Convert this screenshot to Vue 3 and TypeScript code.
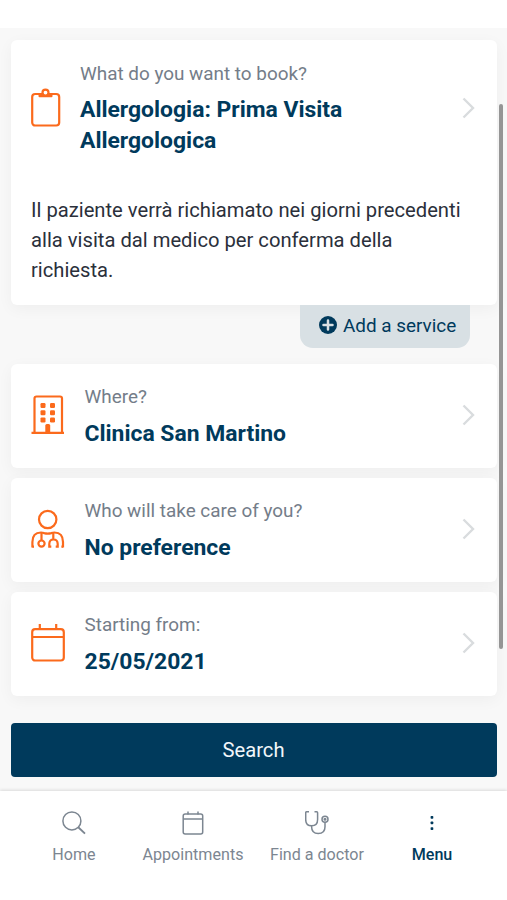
<script setup lang="ts">
interface Field {
  id: 'where' | 'doctor' | 'date'
  label: string
  value: string
}

interface NavItem {
  id: 'home' | 'appointments' | 'find' | 'menu'
  label: string
}

const fields: Field[] = [
  { id: 'where', label: 'Where?', value: 'Clinica San Martino' },
  { id: 'doctor', label: 'Who will take care of you?', value: 'No preference' },
  { id: 'date', label: 'Starting from:', value: '25/05/2021' },
]

const navItems: NavItem[] = [
  { id: 'home', label: 'Home' },
  { id: 'appointments', label: 'Appointments' },
  { id: 'find', label: 'Find a doctor' },
  { id: 'menu', label: 'Menu' },
]
</script>

<template>
  <div class="screen">
    <main class="content">
      <section class="card service">
        <div class="service-row">
          <svg class="icon clipboard" viewBox="0 0 30 40">
            <rect x="1.2" y="6" width="27" height="31.500" rx="3" />
            <path d="M7.500 6.500h14v1.700q0 1-1 1h-12q-1 0-1-1z" fill="#fb6a1c" stroke="none" />
            <circle cx="14.5" cy="4.600" r="3" fill="#fff" />
          </svg>
          <div class="text">
            <span class="label">What do you want to book?</span>
            <strong class="value">Allergologia: Prima Visita<br />Allergologica</strong>
          </div>
          <svg class="chevron" viewBox="0 0 14 22"><path d="M2.500 1.500 12 11 2.500 20.500" /></svg>
        </div>
        <p class="note">
          Il paziente verrà richiamato nei giorni precedenti<br />alla visita dal medico per conferma della<br />richiesta.
        </p>
      </section>

      <button class="add" type="button">
        <svg class="plus" viewBox="0 0 18 18">
          <circle cx="9" cy="9" r="9" fill="#003a5c" />
          <path d="M9 4.500v9M4.500 9h9" stroke="#d8e0e4" stroke-width="2.500" stroke-linecap="round" />
        </svg>
        <span class="add-label">Add a service</span>
      </button>

      <section v-for="field in fields" :key="field.id" class="card field">
        <svg v-if="field.id === 'where'" class="icon" viewBox="0 0 34 40">
          <path d="M.5 37.800h32.500M3.500 37.500V3.500q0-2 2-2h23.500q2 0 2 2V37.500" />
          <g fill="#fb6a1c" stroke="none">
            <rect x="9.500" y="8" width="5" height="5" rx="1.200" />
            <rect x="19" y="8" width="5" height="5" rx="1.200" />
            <rect x="9.500" y="15.200" width="5" height="5" rx="1.200" />
            <rect x="19" y="15.200" width="5" height="5" rx="1.200" />
            <rect x="9.500" y="22.400" width="5" height="5" rx="1.200" />
            <rect x="19" y="22.400" width="5" height="5" rx="1.200" />
            <path d="M14.300 38v-7.500q0-1.500 1.500-1.500h1.900q1.500 0 1.500 1.500v7.500z" />
          </g>
        </svg>
        <svg v-else-if="field.id === 'doctor'" class="icon" viewBox="0 0 34 40">
          <circle cx="16.700" cy="10.500" r="8.700" />
          <path d="M1.400 38.600v-5.600q0-9.500 8.600-9.500 1.500 0 3.200.6 3.500 1 7 0 1.700-.6 3.200-.6 8.600 0 8.600 9.500v5.600" />
          <path d="M10.500 24v7M22.300 24v6.500M20.300 37.600h-2v-2.600q0-4.500 4.200-4.500t4.200 4.500v2.600h-2" />
          <path d="M1.400 37.600h1.600M32 37.600h-1.600" />
          <circle cx="10.500" cy="34.600" r="3.100" />
        </svg>
        <svg v-else class="icon" viewBox="0 0 34 40">
          <rect x="1.200" y="6.200" width="31.600" height="31.300" rx="3" />
          <path d="M1.200 14h31.600M8.800 1v5.500M25.200 1v5.500" />
        </svg>
        <div class="text">
          <span class="label">{{ field.label }}</span>
          <strong class="value">{{ field.value }}</strong>
        </div>
        <svg class="chevron" viewBox="0 0 14 22"><path d="M2.500 1.500 12 11 2.500 20.500" /></svg>
      </section>

      <button class="search" type="button">Search</button>
      <div class="scrollbar"></div>
    </main>

    <nav class="nav">
      <a v-for="item in navItems" :key="item.id" class="nav-item" :class="item.id">
        <svg class="nav-icon" viewBox="0 0 24 24">
          <template v-if="item.id === 'home'">
            <circle cx="9.900" cy="9.900" r="9" />
            <path d="m16 16 7 6.600" stroke-width="1.900" />
          </template>
          <template v-else-if="item.id === 'appointments'">
            <rect x="2.200" y="3" width="19.500" height="20" rx="2" />
            <path d="M2.200 8h19.500M7 .5v3M17 .5v3" />
          </template>
          <template v-else-if="item.id === 'find'">
            <path d="M4 .8H1.700q-1 0-1 1V8.500q0 6.300 5.900 6.300 6 0 6-6.300V1.800q0-1-1-1H9.500" />
            <path d="M6.600 14.800v1q0 6.800 6.600 6.800 6.800 0 6.800-6.800v-4.500" />
            <circle cx="20" cy="8.300" r="3" />
            <circle cx="20" cy="8.300" r=".8" />
          </template>
          <g v-else fill="#003a5c" stroke="none">
            <rect x="10.600" y="5" width="2.700" height="2.700" rx=".7" />
            <rect x="10.600" y="10.600" width="2.700" height="2.700" rx=".7" />
            <rect x="10.600" y="16.200" width="2.700" height="2.700" rx=".7" />
          </g>
        </svg>
        <span class="nav-label">{{ item.label }}</span>
      </a>
    </nav>
  </div>
</template>

<style>
body {
  margin: 0;
  background: #fff;
}
</style>

<style scoped>
.screen {
  box-sizing: border-box;
  width: 507px;
  height: 900px;
  padding-top: 28px;
  overflow: hidden;
  display: flex;
  flex-direction: column;
  background: #fff;
  font-family: Roboto, sans-serif;
  color: #2b303b;
}
.content {
  position: relative;
  box-sizing: border-box;
  height: 763px;
  flex: none;
  padding: 12px 10px 0 11px;
  display: flex;
  flex-direction: column;
  background: #f8f8f8;
}
.card {
  box-sizing: border-box;
  flex: none;
  background: #fff;
  border-radius: 6px;
  box-shadow: 0 4px 16px rgba(0, 0, 0, 0.045);
}
.service {
  height: 264.5px;
  padding: 19px 22px 0 20px;
}
.service-row {
  display: flex;
  height: 137.4px;
}
.service-row .icon {
  margin-top: 28.5px;
  width: 30px;
}
.service-row .text {
  margin-left: 19px;
}
.service-row .chevron {
  margin-top: 38px;
}
.icon {
  width: 34px;
  height: 40px;
  flex: none;
  fill: none;
  stroke: #fb6a1c;
  stroke-width: 2.2;
}
.text {
  flex: 1;
  display: flex;
  flex-direction: column;
}
.label {
  font-size: 18.9px;
  line-height: 30px;
  color: #747d89;
}
.value {
  margin-top: 5px;
  font-size: 22.9px;
  line-height: 31px;
  font-weight: 700;
  color: #003a5c;
  white-space: nowrap;
}
.chevron {
  width: 14px;
  height: 22px;
  flex: none;
  fill: none;
  stroke: #d9dcde;
  stroke-width: 2.4;
}
.note {
  margin: 0;
  font-size: 20.2px;
  line-height: 29.7px;
  white-space: nowrap;
}
.add {
  align-self: flex-end;
  box-sizing: border-box;
  width: 170px;
  height: 43.5px;
  margin: 0 27px 16px 0;
  padding: 0 0 2px 19px;
  border: 0;
  border-radius: 0 0 13px 13px;
  display: flex;
  align-items: center;
  gap: 6px;
  background: #d8e0e4;
  color: #003a5c;
  font: 18.9px Roboto, sans-serif;
  white-space: nowrap;
}
.plus {
  width: 18px;
  height: 18px;
  flex: none;
}
.field {
  height: 104px;
  margin-bottom: 10px;
  padding: 18px 22px 0 20px;
  display: flex;
}
.field .icon {
  margin-top: 13px;
}
.field .text {
  margin-left: 19.5px;
}
.field .value {
  margin-top: 6px;
}
.field .chevron {
  margin-top: 22px;
}
.search {
  flex: none;
  height: 54px;
  margin-top: 17px;
  padding: 0 1px 0 0;
  border: 0;
  border-radius: 4px;
  background: #003a5c;
  color: #f1f6fa;
  font: 20.2px Roboto, sans-serif;
}
.scrollbar {
  position: absolute;
  top: 76px;
  right: 4px;
  width: 4px;
  height: 545px;
  border-radius: 2px;
  background: #959595;
}
.nav {
  position: relative;
  flex: 1;
  padding: 20px 31px 0 28.5px;
  display: grid;
  grid-template-columns: 91px 147px 101px 129px;
  justify-content: start;
  background: #fff;
  box-shadow: 0 -1px 3px rgba(0, 0, 0, 0.12);
}
.nav-item {
  display: flex;
  flex-direction: column;
  align-items: center;
  gap: 8px;
  color: #7c8691;
  font-size: 16.1px;
  line-height: 24px;
  white-space: nowrap;
}
.nav-icon {
  width: 24px;
  height: 24px;
  fill: none;
  stroke: #7c8691;
  stroke-width: 1.5;
}
.menu {
  color: #003a5c;
  font-weight: 500;
}
</style>
